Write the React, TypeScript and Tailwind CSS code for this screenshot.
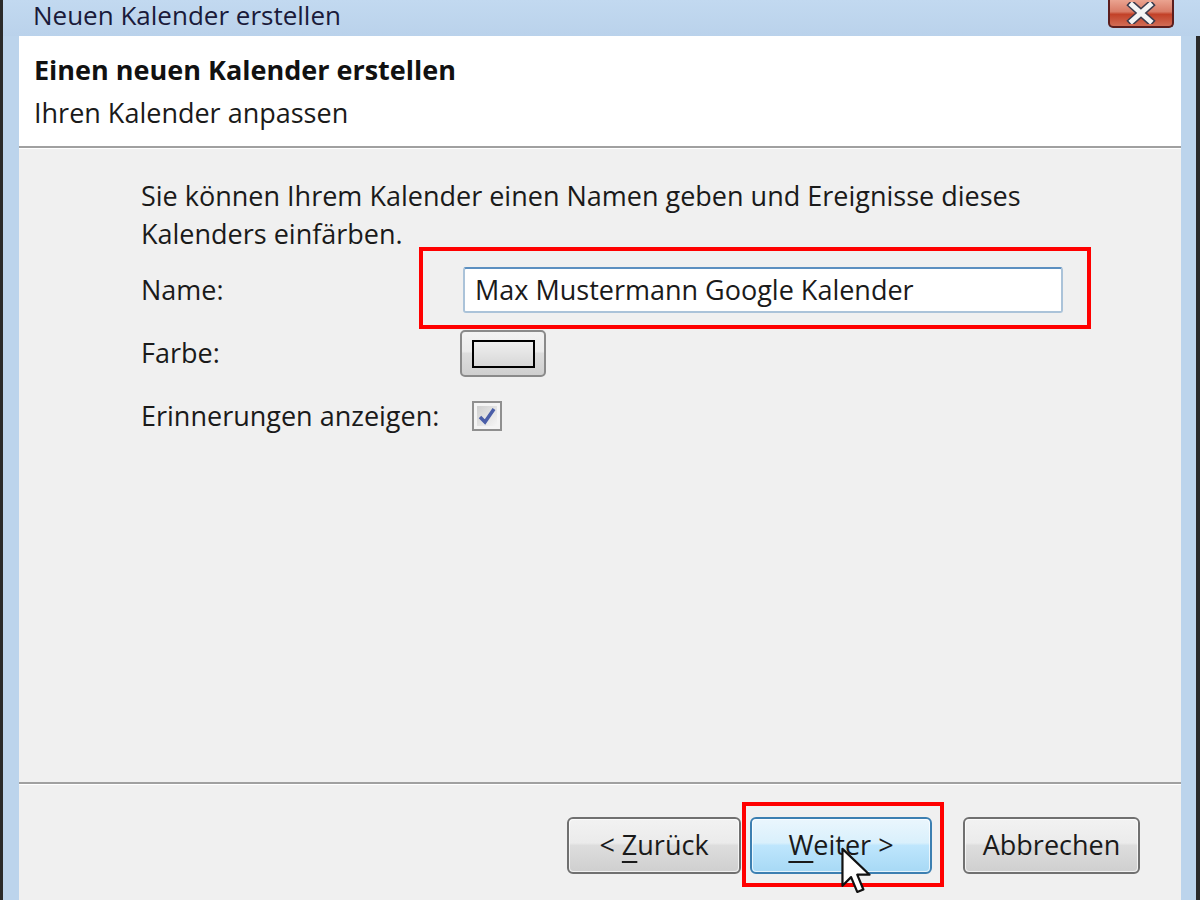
import React from 'react';

const font = { fontFamily: '"Open Sans", "Noto Sans", "Liberation Sans", sans-serif' };

function WinButton({ children, primary = false, w }: { children: React.ReactNode; primary?: boolean; w: string }) {
  return (
    <div
      className={
        'h-[57px] flex items-center justify-center rounded-[6px] border-2 text-[27px] text-[#1a1a1a] ' +
        w +
        ' ' +
        (primary
          ? 'border-[#3c7fb1] bg-[linear-gradient(#eaf6fd_0%,#d9f0fc_45%,#bee6fd_50%,#a7d9f5_100%)]'
          : 'border-[#707070] bg-[linear-gradient(#f2f2f2_0%,#ebebeb_45%,#dddddd_50%,#cfcfcf_100%)]')
      }
    >
      <div className="w-full h-full flex items-center justify-center rounded-[4px] border border-white/70">{children}</div>
    </div>
  );
}

export default function App() {
  return (
    <div className="w-[1200px] h-[900px] overflow-hidden relative flex flex-col bg-[#bcd4ec]" style={font}>
      {/* Title bar */}
      <div className="h-[36px] flex items-start pl-[30px] pt-[2px] bg-[linear-gradient(#c2d9f0,#bad2eb)] border-l-[3px] border-[#2a2a2a]">
        <span className="text-[26px] leading-[26px] text-[#1a1a3a]">Neuen Kalender erstellen</span>
      </div>
      {/* close button */}
      <div className="absolute top-0 left-[1108px] w-[66px] h-[28px] rounded-b-[5px] border-2 border-t-0 border-[#5b1e1e] bg-[linear-gradient(#eaa390_0%,#d97b66_45%,#c24128_55%,#d26c55_100%)] flex items-center justify-center">
        <svg width="30" height="22" viewBox="0 0 30 22">
          <path d="M6 3 L24 19 M24 3 L6 19" stroke="#3b3b4d" strokeWidth="8" strokeLinecap="square" />
          <path d="M6 3 L24 19 M24 3 L6 19" stroke="#f4f4f4" strokeWidth="5" strokeLinecap="square" />
        </svg>
      </div>

      <div className="flex-1 flex border-l-[3px] border-r-[4px] border-[#2a2a2a]">
        <div className="w-[16px] bg-[#bcd4ec]" />
        <div className="flex-1 flex flex-col bg-[#f0f0f0]">
          {/* Header */}
          <div className="h-[110px] bg-white flex flex-col pl-[15px] pt-[16px]">
            <div className="text-[27px] font-bold text-[#111] leading-[36px]">Einen neuen Kalender erstellen</div>
            <div className="text-[27px] text-[#1a1a1a] leading-[36px] mt-[7px]">Ihren Kalender anpassen</div>
          </div>
          <div className="h-[2px] bg-[#a0a0a0]" />
          <div className="h-[1px] bg-white" />

          {/* Body */}
          <div className="flex-1 pl-[122px] pt-[28px] text-[27px] text-[#1a1a1a]">
            <p className="leading-[38px]">
              Sie können Ihrem Kalender einen Namen geben und Ereignisse dieses
              <br />
              Kalenders einfärben.
            </p>
            <div className="flex items-center mt-[14px] h-[46px]">
              <div className="w-[322px]">Name:</div>
              <div className="relative">
                <div className="w-[600px] h-[46px] bg-white border-2 border-[#abc3d9] border-t-[#5c8fc0] rounded-[3px] flex items-center pl-[10px]">
                  Max Mustermann Google Kalender
                </div>
                <div className="absolute left-[-44px] top-[-20px] w-[672px] h-[82px] border-4 border-[#ff0000]" />
              </div>
            </div>
            <div className="flex items-center mt-[17px] h-[47px]">
              <div className="w-[319px]">Farbe:</div>
              <div className="w-[86px] h-[47px] rounded-[5px] border-2 border-[#8a8a8a] bg-[linear-gradient(#f2f2f2_0%,#ebebeb_45%,#dddddd_50%,#cfcfcf_100%)] flex items-center justify-center">
                <div className="w-[63px] h-[28px] border-2 border-black bg-[linear-gradient(#efefef,#d8d8d8)]" />
              </div>
            </div>
            <div className="flex items-center mt-[24px] h-[30px]">
              <div className="w-[331px]">Erinnerungen anzeigen:</div>
              <div className="w-[30px] h-[30px] border-2 border-[#8f8f8f] bg-[#f4f4f4] p-[3px]">
                <div className="w-full h-full bg-[linear-gradient(135deg,#cfcfcf,#f5f5f5)] flex items-center justify-center">
                  <svg width="18" height="18" viewBox="0 0 18 18">
                    <path d="M2 10 L7 15 L16 2" stroke="#4a5ea8" strokeWidth="3.5" fill="none" />
                  </svg>
                </div>
              </div>
            </div>
          </div>

          {/* Footer */}
          <div className="h-[2px] bg-[#a0a0a0]" />
          <div className="h-[1px] bg-white" />
          <div className="h-[115px] flex items-start justify-end pr-[41px] pt-[32px] gap-[9px] text-[#1a1a1a]">
            <WinButton w="w-[174px]">
              <span>&lt; <span className="underline underline-offset-[6px]">Z</span>urück</span>
            </WinButton>
            <div className="relative">
              <WinButton w="w-[182px]" primary>
                <span><span className="underline underline-offset-[6px]">W</span>eiter &gt;</span>
              </WinButton>
              <div className="absolute left-[-8px] top-[-15px] w-[202px] h-[85px] border-4 border-[#ff0000]" />
            </div>
            <div className="w-[13px]" />
            <WinButton w="w-[177px]">Abbrechen</WinButton>
          </div>
        </div>
        <div className="w-[15px] bg-[#bcd4ec]" />
      </div>

      {/* Mouse cursor */}
      <svg className="absolute left-[840px] top-[846px]" width="32" height="50" viewBox="0 0 13 20">
        <path d="M1 1 L1 16 L4.5 12.5 L7 18.5 L9.5 17.5 L7 11.5 L12 11.5 Z" fill="white" stroke="#111" strokeWidth="0.9" strokeLinejoin="round" />
      </svg>
    </div>
  );
}
